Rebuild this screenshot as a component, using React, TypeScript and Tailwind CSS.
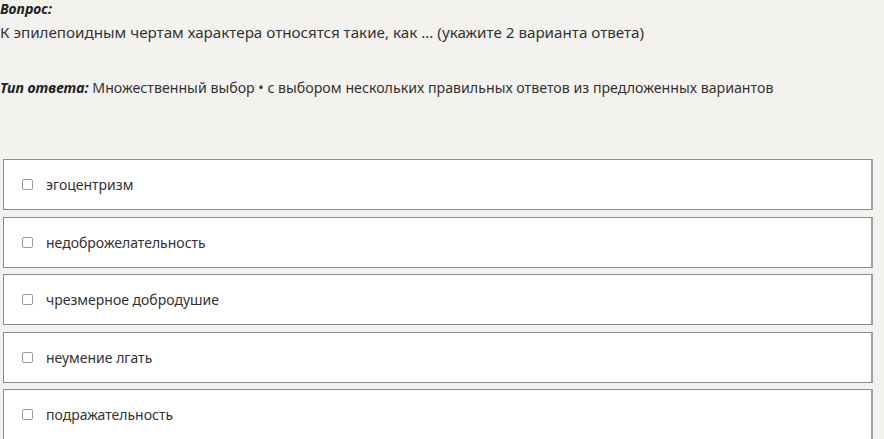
import React from 'react';

const options = [
  'эгоцентризм',
  'недоброжелательность',
  'чрезмерное добродушие',
  'неумение лгать',
  'подражательность',
];

export default function App() {
  return (
    <div
      className="w-[884px] h-[439px] overflow-hidden bg-[#f3f2ef] text-[#333333] text-[14px]"
      style={{ fontFamily: '"Noto Sans", "Open Sans", sans-serif' }}
    >
      <div>
        <div className="font-bold italic leading-[18px] text-[#222]">Вопрос:</div>
        <div className="leading-[20px] mt-[4px] text-[15.2px]">
          К эпилепоидным чертам характера относятся такие, как ... (укажите 2 варианта ответа)
        </div>
        <div className="leading-[20px] mt-[36px] text-[14.2px]">
          <span className="font-bold italic text-[#222]">Тип ответа:</span> Множественный выбор • с выбором нескольких правильных ответов из предложенных вариантов
        </div>
      </div>

      <div className="mt-[61px] ml-[3px] w-[870px] flex flex-col gap-[6.5px]">
        {options.map((o) => (
          <div
            key={o}
            className="h-[51px] bg-white border border-[#8c8c8c] border-r-[#a0a0a0] border-r-2 flex items-center pl-[18px]"
          >
            <span className="w-[11px] h-[11px] border border-[#9a9a9a] rounded-[2px] bg-white mr-[13px]" />
            <span className="text-[14px]">{o}</span>
          </div>
        ))}
      </div>
    </div>
  );
}
